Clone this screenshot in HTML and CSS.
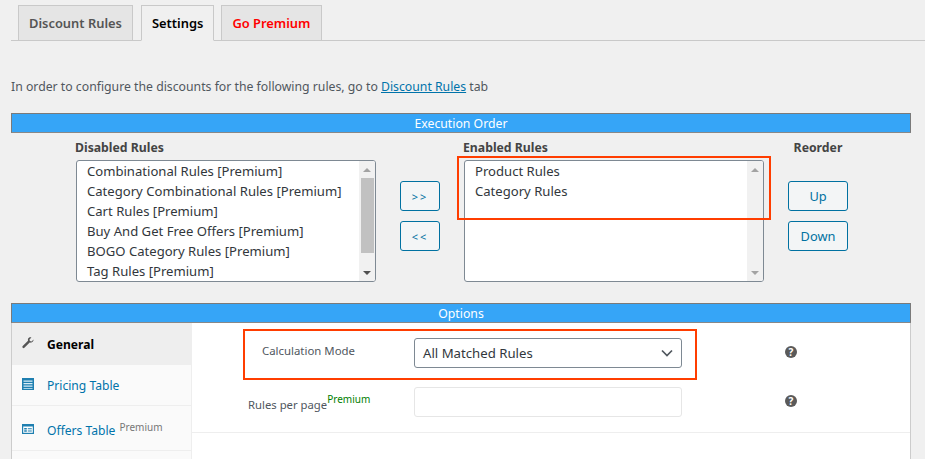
FILE: index.html
```html
<!DOCTYPE html>
<html lang="en">
<head>
<meta charset="utf-8">
<title>Settings</title>
<link rel="stylesheet" href="styles.css">
</head>
<body>
<div class="page">
  <nav class="tabs">
    <a class="tab">Discount Rules</a>
    <a class="tab tab-active">Settings</a>
    <a class="tab tab-premium">Go Premium</a>
  </nav>
  <p class="intro">In order to configure the discounts for the following rules, go to <a class="link">Discount Rules</a> tab</p>

  <div class="bar">Execution Order</div>
  <section class="order">
    <div class="col col-list">
      <div class="col-title">Disabled Rules</div>
      <div class="list">
        <ul class="items">
          <li>Combinational Rules [Premium]</li>
          <li>Category Combinational Rules [Premium]</li>
          <li>Cart Rules [Premium]</li>
          <li>Buy And Get Free Offers [Premium]</li>
          <li>BOGO Category Rules [Premium]</li>
          <li>Tag Rules [Premium]</li>
        </ul>
        <div class="scroll">
          <span class="arrow arrow-up"></span>
          <span class="track"><span class="thumb"></span></span>
          <span class="arrow arrow-down arrow-dark"></span>
        </div>
      </div>
    </div>
    <div class="col col-move">
      <button class="btn btn-move">&gt;&gt;</button>
      <button class="btn btn-move">&lt;&lt;</button>
    </div>
    <div class="col col-list">
      <div class="col-title">Enabled Rules</div>
      <div class="list">
        <ul class="items">
          <li>Product Rules</li>
          <li>Category Rules</li>
        </ul>
        <div class="scroll scroll-off">
          <span class="arrow arrow-up"></span>
          <span class="track"></span>
          <span class="arrow arrow-down"></span>
        </div>
      </div>
    </div>
    <div class="col col-reorder">
      <div class="col-title col-title-center">Reorder</div>
      <div class="reorder-btns">
        <button class="btn">Up</button>
        <button class="btn">Down</button>
      </div>
    </div>
  </section>

  <div class="bar">Options</div>
  <section class="panel">
    <aside class="side">
      <a class="side-item side-active">
        <svg class="ico" viewBox="0 0 12 12"><path fill="#555" d="M11.5 2.6 9.6 4.4 7.9 4 7.5 2.4 9.4.5C7.9 0 6.4.7 6 2.1c-.2.6-.1 1.2 0 1.7L.7 9.1c-.5.5-.5 1.2 0 1.7s1.2.5 1.7 0l5.300-5.200c.5.200 1.100.200 1.700 0 1.400-.5 2.300-1.800 2.100-3z"/></svg>
        <span>General</span>
      </a>
      <a class="side-item">
        <svg class="ico" viewBox="0 0 12 12"><path fill="#1f7fb0" d="M0 0h12v12H0z"/><path fill="#d9eef8" d="M1.500 2.500h9v1.200h-9zM1.500 5h9v1.200h-9zM1.500 7.500h9v1.200h-9zM1.500 10h9v.8h-9z"/></svg>
        <span>Pricing Table</span>
      </a>
      <a class="side-item side-offers">
        <svg class="ico" viewBox="0 0 12 12"><path fill="#1f7fb0" d="M0 1h12v10H0z"/><path fill="#fff" d="M1.200 3.500h9.600v6.300H1.200z"/><path fill="#1f7fb0" d="M2.200 5h2.600v1.500H2.200zM2.200 7.300h2.600v1.500H2.200zM5.800 5.300h4v1h-4zM5.800 7.600h4v1h-4z"/></svg>
        <span>Offers Table</span><sup class="side-sup">Premium</sup>
      </a>
    </aside>
    <div class="fields">
      <div class="field field-mode">
        <label class="field-label label-mode">Calculation Mode</label>
        <div class="select">
          <span>All Matched Rules</span>
          <svg class="chevron" viewBox="0 0 12 8"><path d="M1 1.500 6 6.500 11 1.500" fill="none" stroke="#50575e" stroke-width="1.700"/></svg>
        </div>
        <span class="help">?</span>
      </div>
      <div class="field field-rules">
        <label class="field-label label-rules">Rules per page<sup class="premium">Premium</sup></label>
        <div class="input"></div>
        <span class="help">?</span>
      </div>
    </div>
  </section>

  <div class="mark mark-enabled"></div>
  <div class="mark mark-mode"></div>
</div>
</body>
</html>
```

FILE: styles.css
```css
* { box-sizing: border-box; }
html, body { margin: 0; padding: 0; }
body {
  background: #f0f0f0;
  color: #444;
  font-family: "Noto Sans", "Open Sans", sans-serif;
  font-size: 12.25px;
  overflow: hidden;
  height: 459px;
}
.page {
  position: relative;
  width: 925px;
  height: 459px;
  padding: 5px 14px 0 11px;
  overflow: hidden;
}
.tabs {
  display: flex;
  gap: 8px;
  height: 36px;
  padding-left: 7px;
  border-bottom: 1px solid #c9c9c9;
  margin-right: -14px;
}
.tab {
  height: 36px;
  padding: 0 10px;
  display: flex;
  align-items: center;
  background: #e5e5e5;
  border: 1px solid #c9c9c9;
  color: #555;
  font-weight: 600;
  font-size: 12.9px;
}
.tab-active { background: #f0f0f0; border-bottom-color: #f0f0f0; color: #000; }
.tab-premium { color: #f00; margin-left: -1px; padding-right: 11px; }
.intro { margin: 36px 0 0; height: 18px; line-height: 20px; color: #50575e; }
.link { color: #0073aa; text-decoration: underline; }
.bar {
  height: 20px;
  line-height: 20px;
  margin-top: 18px;
  background: #36a5f7;
  border: 1px solid #7a7a7a;
  border-bottom-color: #888;
  color: #fff;
  text-align: center;
}
.order { display: flex; height: 152px; }
.col-list { width: 300px; }
.col-list:first-child { margin-left: 65px; }
.col-title {
  height: 27px;
  line-height: 30px;
  margin-left: -1px;
  font-weight: 700;
  color: #444;
}
.col-title-center { text-align: center; margin-left: 0; }
.list {
  display: flex;
  height: 122px;
  background: #fff;
  border: 1px solid #7e8993;
  border-radius: 3px;
  overflow: hidden;
}
.items {
  flex: 1;
  list-style: none;
  margin: 0;
  padding: 0 0 0 10px;
  color: #32373c;
  font-size: 13.1px;
  line-height: 20px;
}
.items li { height: 20px; white-space: nowrap; }
.scroll { width: 16px; display: flex; flex-direction: column; background: #f1f1f1; flex: none; }
.track { flex: 1; display: block; padding: 0 1px; }
.thumb { display: block; width: 13px; height: 75px; margin: 0 auto; background: #c1c1c1; }
.scroll .arrow { flex: none; height: 17px; display: flex; align-items: center; justify-content: center; }
.arrow::before { content: ""; width: 0; height: 0; border-left: 4px solid transparent; border-right: 4px solid transparent; }
.arrow-up::before { border-bottom: 4px solid #a3a3a3; }
.arrow-down::before { border-top: 4px solid #a3a3a3; }
.arrow-dark::before { border-top-color: #505050; }
.col-move {
  width: 88px;
  display: flex;
  flex-direction: column;
  align-items: center;
  gap: 10px;
  padding-top: 48px;
}
.col-reorder { width: 60px; margin-left: 24px; }
.reorder-btns { display: flex; flex-direction: column; gap: 10px; padding-top: 21px; }
.btn {
  width: 60px;
  height: 30px;
  padding: 0;
  background: #f3f5f6;
  border: 1px solid #0071a1;
  border-radius: 3px;
  color: #0071a1;
  font: 12.8px "Noto Sans", "Open Sans", sans-serif;
}
.btn-move { width: 40px; letter-spacing: 2px; font-size: 11px; }
.panel {
  display: flex;
  height: 136px;
  background: #fff;
  border-left: 1px solid #ccc;
  border-right: 1px solid #ccc;
  overflow: hidden;
}
.side { width: 180px; flex: none; background: #fafafa; border-right: 1px solid #eee; }
.side-item {
  display: flex;
  align-items: flex-start;
  height: 41px;
  padding: 12px 0 0 10px;
  color: #0073aa;
  font-size: 12.1px;
  line-height: 18px;
  border-bottom: 1px solid #eee;
}
.side-active { height: 42px; padding-top: 13px; background: #eee; color: #000; font-weight: 700; border-bottom: 0; }
.side-offers { height: 45px; padding-top: 16px; }
.ico { width: 12px; height: 12px; flex: none; margin-right: 13px; margin-top: 1px; }
.side-sup { font-size: 10px; color: #777; line-height: 14px; margin: -2px 0 0 4px; }
.fields { flex: 1; }
.field {
  display: flex;
  align-items: flex-start;
  padding-left: 222px;
  position: relative;
}
.field-mode { height: 58px; padding-top: 15px; }
.field-rules { height: 52px; padding-top: 6px; border-bottom: 1px solid #eee; }
.field-label { position: absolute; white-space: nowrap; color: #50575e; }
.label-mode { left: 70px; top: 20px; font-size: 11.4px; line-height: 16px; }
.label-rules { left: 56px; top: 13px; font-size: 11.3px; line-height: 18px; }
.premium { font-size: 10px; color: #008000; line-height: 10px; vertical-align: 6px; }
.select, .input { width: 268px; height: 30px; border-radius: 3px; background: #fff; flex: none; }
.select {
  display: flex;
  align-items: center;
  justify-content: space-between;
  padding: 0 8px;
  border: 1px solid #7e8993;
  color: #32373c;
  font-size: 13.2px;
}
.chevron { width: 12px; height: 8px; margin-right: 0; }
.input { border: 1px solid #e6e6e6; }
.help {
  width: 12px;
  height: 12px;
  margin: 8px 0 0 103px;
  border-radius: 50%;
  background: #5a5a5a;
  color: #fff;
  font-size: 10px;
  font-weight: 700;
  line-height: 12px;
  text-align: center;
  flex: none;
}
.mark { position: absolute; border: 2px solid #ff3d00; pointer-events: none; }
.mark-enabled { left: 457px; top: 156px; width: 314px; height: 64px; }
.mark-mode { left: 243px; top: 329px; width: 454px; height: 51px; }
```
